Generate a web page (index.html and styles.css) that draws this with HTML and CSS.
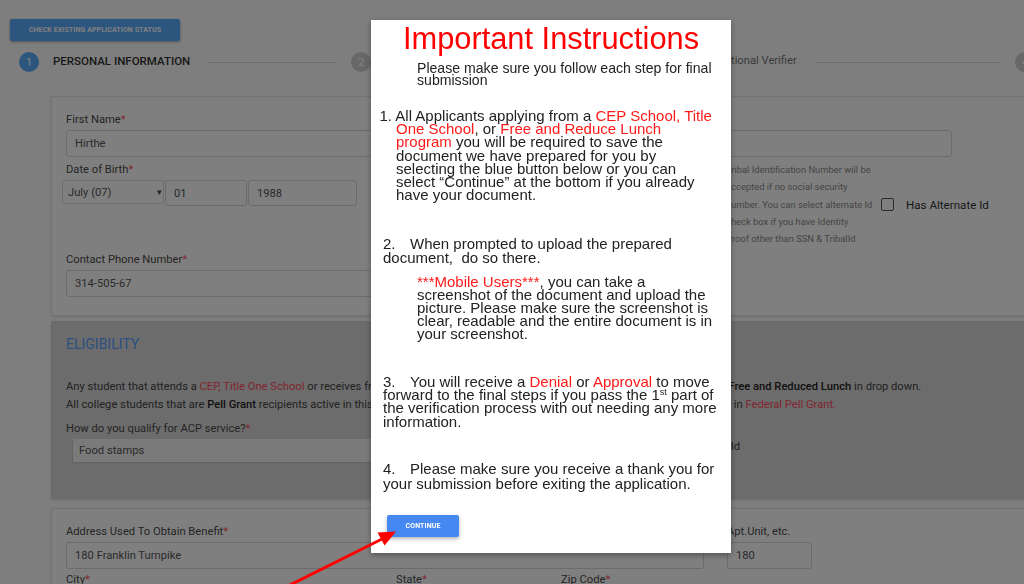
FILE: index.html
```html
<!DOCTYPE html>
<html lang="en">
<head>
<meta charset="utf-8">
<title>ACP Application</title>
<link rel="stylesheet" href="styles.css">
</head>
<body>
<div class="page">
  <button class="status-btn" type="button">CHECK EXISTING APPLICATION STATUS</button>

  <ol class="stepper">
    <li class="step active"><span class="dot">1</span><span class="step-label">PERSONAL INFORMATION</span><span class="step-line"></span></li>
    <li class="step"><span class="dot">2</span><span class="step-label">Eligibility</span><span class="step-line"></span></li>
    <li class="step"><span class="dot">3</span><span class="step-label">Optional Verifier</span><span class="step-line"></span></li>
    <li class="step"><span class="dot">4</span><span class="step-label">Submit</span></li>
  </ol>

  <main class="content">
    <section class="card personal">
      <div class="row">
        <div class="field w-first"><label>First Name<span class="req">*</span></label><div class="input">Hirthe</div></div>
        <div class="field w-last"><label>Last Name<span class="req">*</span></label><div class="input"></div></div>
      </div>
      <div class="row row-dob">
        <div class="field w-dob">
          <label>Date of Birth<span class="req">*</span></label>
          <div class="dob-controls">
            <div class="select-month">July (07)<span class="caret">&#9662;</span></div>
            <div class="input in-day">01</div>
            <div class="input in-year">1988</div>
          </div>
        </div>
        <div class="field w-ssn"><label>Last 4 SSN<span class="req">*</span></label><div class="input"></div></div>
        <div class="helper">Tribal Identification Number will be<br>accepted if no social security<br>number. You can select alternate Id<br>check box if you have Identity<br>Proof other than SSN &amp; TribalId</div>
        <div class="alt-id"><span class="checkbox"></span><span class="alt-label">Has Alternate Id</span></div>
      </div>
      <div class="row row-phone">
        <div class="field w-first"><label>Contact Phone Number<span class="req">*</span></label><div class="input">314-505-67</div></div>
      </div>
    </section>

    <section class="card eligibility">
      <h3 class="elig-title">ELIGIBILITY</h3>
      <p class="elig-text">Any student that attends a <span class="red">CEP, Title One School</span> or receives free or reduced price school meals should select CEP, Title One School or <b>Free and Reduced Lunch</b> in drop down.<br>All college students that are <b>Pell Grant</b> recipients active in this current award year should qualify through their active school enrollment in <span class="red">Federal Pell Grant.</span></p>
      <div class="elig-row">
        <div class="field">
          <label>How do you qualify for ACP service?<span class="req">*</span></label>
          <div class="select-plain">Food stamps</div>
        </div>
        <div class="tribal">Tribal Id</div>
      </div>
    </section>

    <section class="card address">
      <div class="row">
        <div class="field w-addr"><label>Address Used To Obtain Benefit<span class="req">*</span></label><div class="input">180 Franklin Turnpike</div></div>
        <div class="field w-apt"><label>Apt.Unit, etc.</label><div class="input">180</div></div>
      </div>
      <div class="row row-city">
        <div class="field w-city"><label>City<span class="req">*</span></label><div class="input"></div></div>
        <div class="field w-state"><label>State<span class="req">*</span></label><div class="input"></div></div>
        <div class="field w-zip"><label>Zip Code<span class="req">*</span></label><div class="input"></div></div>
      </div>
    </section>
  </main>
</div>

<div class="backdrop"></div>

<div class="modal" role="dialog" aria-labelledby="modal-title">
  <h2 class="m-title" id="modal-title">Important Instructions</h2>
  <p class="m-sub">Please make sure you follow each step for final<br>submission</p>
  <p class="m-item m-item1">1. All Applicants applying from a <span class="m-red">CEP School, Title<br>One School</span>, or <span class="m-red">Free and Reduce Lunch<br>program</span> you will be required to save the<br>document we have prepared for you by<br>selecting the blue button below or you can<br>select “Continue” at the bottom if you already<br>have your document.</p>
  <p class="m-item m-item2"><span class="num">2.</span>When prompted to upload the prepared<br>document,&nbsp; do so there.</p>
  <p class="m-item m-note"><span class="m-red">***Mobile Users***</span>, you can take a<br>screenshot of the document and upload the<br>picture. Please make sure the screenshot is<br>clear, readable and the entire document is in<br>your screenshot.</p>
  <p class="m-item m-item3"><span class="num">3.</span>You will receive a <span class="m-red">Denial</span> or <span class="m-red">Approval</span> to move<br>forward to the final steps if you pass the 1<sup>st</sup> part of<br>the verification process with out needing any more<br>information.</p>
  <p class="m-item m-item4"><span class="num">4.</span>Please make sure you receive a thank you for<br>your submission before exiting the application.</p>
  <button class="continue" type="button">CONTINUE</button>
</div>

<svg class="arrow" viewBox="0 0 1024 584" width="1024" height="584" aria-hidden="true">
  <line x1="276" y1="592" x2="384" y2="538" stroke="#ff0000" stroke-width="3"/>
  <polygon points="396,531.5 377.5,532.5 384.5,545.5" fill="#ff0000"/>
</svg>
</body>
</html>
```

FILE: styles.css
```css
* { box-sizing: border-box; }

html, body {
  margin: 0;
  height: 100%;
  overflow: hidden;
}

body {
  background: #fdfdfd;
  font-family: Roboto, "Liberation Sans", sans-serif;
  color: #444;
}

.page {
  width: 1100px;
  padding: 19px 0 0 10px;
}

.status-btn {
  display: block;
  width: 170px;
  height: 22px;
  padding: 0;
  border: 0;
  border-radius: 2px;
  background: #5aacff;
  color: #fff;
  font: 700 7px Roboto, sans-serif;
  letter-spacing: 0.1px;
  box-shadow: 0 1px 3px rgba(0, 0, 0, 0.35);
}

/* stepper */
.stepper {
  list-style: none;
  margin: 11px 0 0 9px;
  padding: 0;
  display: flex;
}
.step {
  width: 332px;
  flex: none;
  display: flex;
  align-items: center;
}
.dot {
  flex: none;
  width: 20px;
  height: 20px;
  border-radius: 50%;
  background: #d0d0d0;
  color: #fff;
  font-size: 11px;
  display: flex;
  align-items: center;
  justify-content: center;
}
.step.active .dot { background: #5aacff; }
.step-label {
  margin-left: 14px;
  font-size: 11.2px;
  color: #777;
  white-space: nowrap;
  line-height: 14px;
  margin-bottom: 2px;
}
.step.active .step-label {
  color: #333;
  font-weight: 500;
  font-size: 11.5px;
}
.step-line {
  flex: 1;
  height: 1px;
  background: #dcdcdc;
  margin: 0 14px 0 18px;
}

/* cards */
.content {
  width: 1000px;
  margin: 24px 0 0 41px;
}
.card {
  background: #fff;
  border: 1px solid #e6e6e6;
  border-radius: 2px;
  box-shadow: 0 1px 3px rgba(0, 0, 0, 0.14);
}
.row {
  display: flex;
  gap: 12px;
}
.field label {
  display: block;
  font-size: 11.2px;
  line-height: 14px;
  color: #4a4a4a;
  margin-bottom: 3px;
  white-space: nowrap;
}
.req { color: #ff4d5e; }
.red { color: #ff4d5e; }
.input {
  height: 27px;
  border: 1px solid #d6d6d6;
  border-radius: 3px;
  padding: 0 8px;
  font-size: 11.2px;
  color: #555;
  display: flex;
  align-items: center;
  background: #fff;
}

.personal { padding: 16px 14px 18px; }
.w-first { width: 434px; }
.w-last { width: 440px; }

.row-dob { margin-top: 6px; gap: 0; }
.w-dob { width: 305px; }
.dob-controls {
  display: flex;
  align-items: flex-start;
  gap: 1px;
  margin-left: -4px;
}
.select-month {
  width: 102px;
  height: 24px;
  border: 1px solid #dedede;
  border-radius: 3px 0 0 3px;
  padding: 0 0 0 5px;
  font-size: 11.2px;
  color: #555;
  display: flex;
  align-items: center;
  position: relative;
}
.caret {
  position: absolute;
  right: 1px;
  top: 6px;
  font-size: 9px;
  color: #444;
}
.in-day { width: 82px; height: 26px; }
.in-year { width: 109px; height: 26px; }
.w-ssn { width: 320px; margin-left: 24px; }
.helper {
  width: 149px;
  margin: -2px 0 0 11px;
  font-size: 9.4px;
  line-height: 17.3px;
  color: #8a8a8a;
  white-space: nowrap;
}
.alt-id {
  display: flex;
  align-items: center;
  margin: 35px 0 0 6px;
  height: 13px;
}
.checkbox {
  width: 13px;
  height: 13px;
  border: 1.5px solid #555;
  border-radius: 2px;
  background: #fff;
}
.alt-label {
  margin-left: 12px;
  font-size: 11.6px;
  color: #333;
}
.row-phone { margin-top: 6px; }

/* eligibility */
.eligibility {
  margin-top: 5px;
  background: #d8d8d8;
  border-color: #d2d2d2;
  padding: 14px 14px 36px;
}
.elig-title {
  margin: 0;
  font-size: 14px;
  line-height: 17px;
  font-weight: 400;
  color: #5aa0ff;
}
.elig-text {
  margin: 25px 0 0;
  font-size: 11.2px;
  line-height: 17.6px;
  color: #444;
  white-space: nowrap;
}
.elig-text b { color: #222; font-weight: 500; }
.elig-row {
  margin-top: 8px;
  display: grid;
  grid-template-columns: 634px auto;
}
.select-plain {
  margin-left: 7px;
  height: 23px;
  background: #f4f4f4;
  padding-left: 6px;
  font-size: 11.2px;
  color: #555;
  display: flex;
  align-items: center;
  box-shadow: -1px 1px 1px rgba(0, 0, 0, 0.08);
}
.tribal {
  align-self: end;
  padding-bottom: 8px;
  font-size: 11.2px;
  line-height: 14px;
  color: #444;
}

/* address */
.address {
  margin-top: 9px;
  padding: 16px 14px 20px;
}
.address .row { gap: 23px; }
.w-addr { width: 638px; }
.w-apt { width: 85px; }
.row-city { margin-top: 4px; }
.address .row-city { gap: 10px; }
.w-city { width: 320px; }
.w-state { width: 155px; }
.w-zip { width: 150px; }

/* overlay + modal */
.backdrop {
  position: fixed;
  inset: 0;
  background: rgba(0, 0, 0, 0.5);
}
.modal {
  position: fixed;
  left: 371px;
  top: 20px;
  width: 360px;
  height: 533px;
  background: #fff;
  box-shadow: 0 2px 6px rgba(0, 0, 0, 0.35);
  font-family: "Liberation Sans", Arial, sans-serif;
  color: #222;
}
.m-title {
  margin: 0;
  padding-top: 2px;
  font-size: 30.8px;
  line-height: 33px;
  font-weight: 400;
  color: #ff0000;
  text-align: center;
}
.modal p {
  margin: 0;
  white-space: nowrap;
  font-size: 15px;
}
.m-red { color: #ff1a1a; }
.modal .m-sub {
  margin-top: 6.5px;
  padding-left: 46px;
  font-size: 14.1px;
  line-height: 12.7px;
}
.modal .m-item1 {
  margin-top: 22px;
  padding-left: 25px;
  text-indent: -16.5px;
  line-height: 13.2px;
}
.num {
  display: inline-block;
  width: 27px;
}
.modal .m-item2 {
  margin-top: 35.7px;
  padding-left: 12px;
  line-height: 13.7px;
}
.modal .m-note {
  margin-top: 10.5px;
  padding-left: 46px;
  line-height: 13.1px;
}
.modal .m-item3 {
  margin-top: 34.4px;
  padding-left: 12px;
  line-height: 13.3px;
}
.modal .m-item4 {
  margin-top: 33.3px;
  padding-left: 12px;
  line-height: 15px;
}
.modal sup {
  font-size: 9px;
  line-height: 0;
  vertical-align: 5px;
}
.continue {
  display: block;
  margin: 23.7px 0 0 16px;
  width: 72px;
  height: 22px;
  padding: 0;
  border: 0;
  border-radius: 2px;
  background: #4688f1;
  color: #fff;
  font: 700 7px Roboto, sans-serif;
  letter-spacing: 0.1px;
  box-shadow: 0 2px 4px rgba(0, 0, 0, 0.3);
}

.arrow {
  position: fixed;
  left: 0;
  top: 0;
  pointer-events: none;
}
```
